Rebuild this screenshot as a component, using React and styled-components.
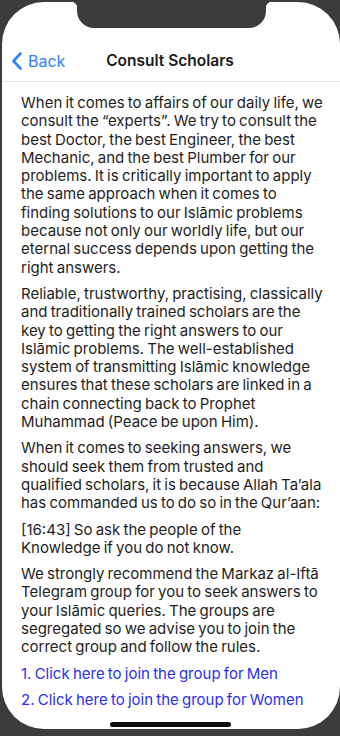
import React from "react";
import styled, { createGlobalStyle } from "styled-components";

const GlobalStyle = createGlobalStyle`
  html, body {
    margin: 0;
    padding: 0;
    background: #3c3c3c;
  }
  * {
    box-sizing: border-box;
  }
`;

const Device = styled.div`
  width: 340px;
  height: 736px;
  background: #3c3c3c;
  padding: 2px 0 7px 2px;
  position: relative;
  overflow: hidden;
`;

const Screen = styled.div`
  height: 100%;
  background: #ffffff;
  border-radius: 42px;
  display: flex;
  flex-direction: column;
  overflow: hidden;
  font-family: Inter, "Liberation Sans", Arial, sans-serif;
`;

const Notch = styled.div`
  position: absolute;
  top: 0;
  left: 77px;
  width: 189px;
  height: 28px;
  background: #3c3c3c;
  border-radius: 0 0 17px 17px;
  &::before,
  &::after {
    content: "";
    position: absolute;
    top: 2px;
    width: 6px;
    height: 6px;
  }
  &::before {
    left: -6px;
    background: radial-gradient(circle at 0 100%, transparent 6px, #3c3c3c 6.5px);
  }
  &::after {
    right: -6px;
    background: radial-gradient(circle at 100% 100%, transparent 6px, #3c3c3c 6.5px);
  }
`;

const NavBar = styled.div`
  margin-top: 38px;
  height: 42px;
  flex-shrink: 0;
  display: grid;
  grid-template-columns: 1fr auto 1fr;
  align-items: center;
  border-bottom: 1px solid #e3e3e3;
  padding: 0 8px;
`;

const BackButton = styled.div`
  display: flex;
  align-items: center;
  gap: 5px;
  color: #2f7ff5;
  font-size: 16px;
  svg {
    display: block;
  }
`;

const Title = styled.div`
  font-size: 15.5px;
  font-weight: 600;
  color: #1a1a1a;
  transform: translateX(-1px);
`;

const Content = styled.div`
  padding: 12px 16.65px 0 19px;
  display: flex;
  flex-direction: column;
  gap: 8px;
`;

const Para = styled.p`
  margin: 0;
  font-size: 15px;
  line-height: 18.3px;
  word-spacing: -1px;
  color: ${(p) => (p.$link ? "#2b2ff2" : "#1e1e1e")};
`;

const HomeBar = styled.div`
  position: absolute;
  left: 110px;
  bottom: 9px;
  width: 121px;
  height: 5px;
  border-radius: 3px;
  background: #0c0c0c;
`;

const Chevron = () => (
  <svg width="13" height="20" viewBox="0 0 13 20" fill="none">
    <path
      d="M10.5 2.5 L3.5 10 L10.5 17.5"
      stroke="#2f7ff5"
      strokeWidth="2.6"
      strokeLinecap="round"
      strokeLinejoin="round"
    />
  </svg>
);

const paragraphs = [
  "When it comes to affairs of our daily life, we consult the \u201Cexperts\u201D. We try to consult the best Doctor, the best Engineer, the best Mechanic, and the best Plumber for our problems. It is critically important to apply the same approach when it comes to finding solutions to our Isl\u0101mic problems because not only our worldly life, but our eternal success depends upon getting the right answers.",
  "Reliable, trustworthy, practising, classically and traditionally trained scholars are the key to getting the right answers to our Isl\u0101mic problems. The well-established system of transmitting Isl\u0101mic knowledge ensures that these scholars are linked in a chain connecting back to Prophet Muhammad (Peace be upon Him).",
  "When it comes to seeking answers, we should seek them from trusted and qualified scholars, it is because Allah Ta\u2019ala has commanded us to do so in the Qur\u2019aan:",
  "[16:43] So ask the people of the Knowledge if you do not know.",
  "We strongly recommend the Markaz al-Ift\u0101 Telegram group for you to seek answers to your Isl\u0101mic queries. The groups are segregated so we advise you to join the correct group and follow the rules.",
];

const links = [
  "1. Click here to join the group for Men",
  "2. Click here to join the group for Women",
];

const App = () => {
  return (
    <Device>
      <GlobalStyle />
      <Screen>
        <NavBar>
          <BackButton>
            <Chevron />
            <span>Back</span>
          </BackButton>
          <Title>Consult Scholars</Title>
          <div />
        </NavBar>
        <Content>
          {paragraphs.map((text, i) => (
            <Para key={i}>{text}</Para>
          ))}
          {links.map((text) => (
            <Para key={text} $link>
              {text}
            </Para>
          ))}
        </Content>
      </Screen>
      <Notch />
      <HomeBar />
    </Device>
  );
};

export default App;
